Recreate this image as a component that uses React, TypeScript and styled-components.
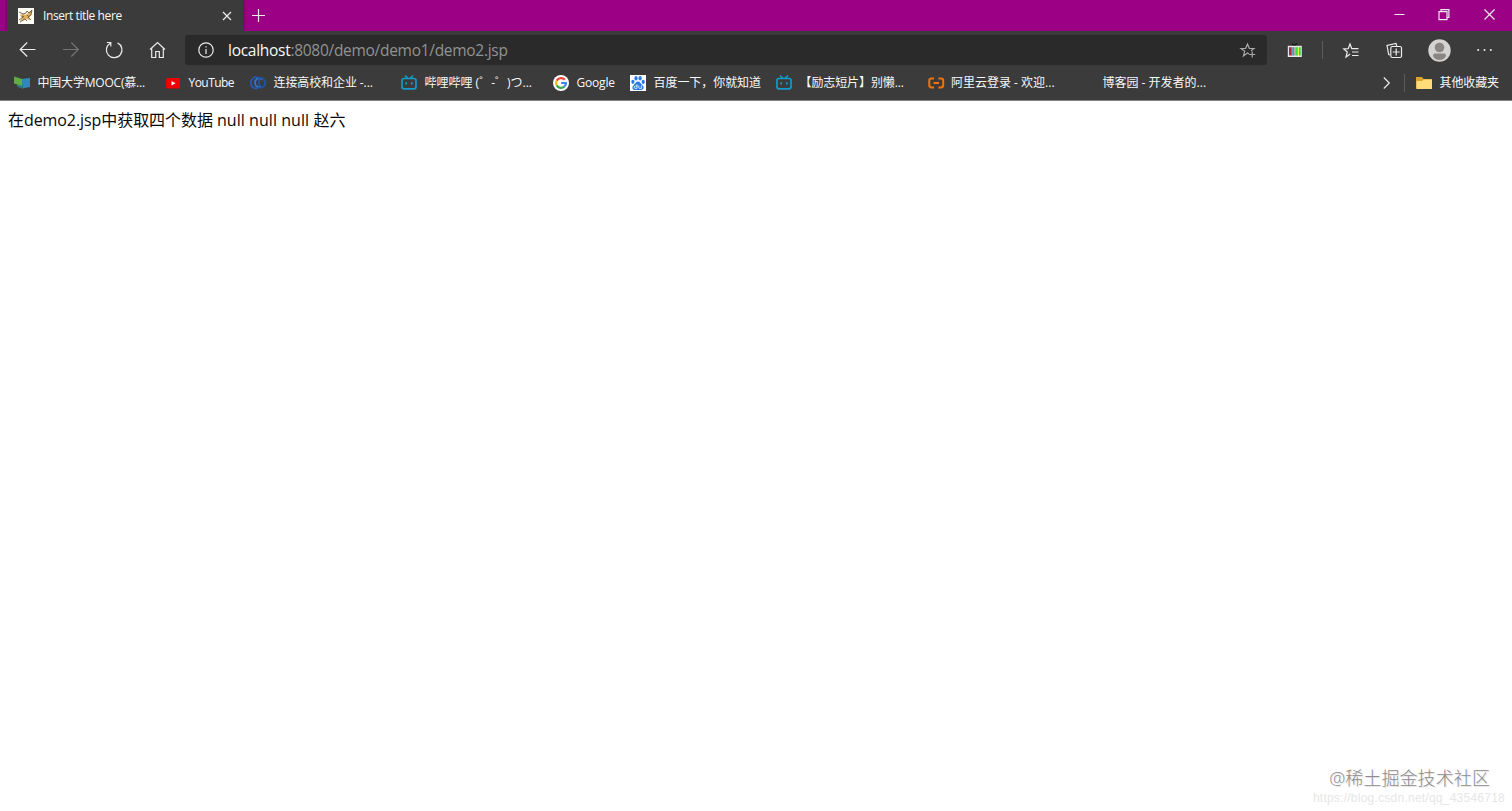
import React from 'react';
import styled, { createGlobalStyle } from 'styled-components';

const GlobalStyle = createGlobalStyle`
  * { box-sizing: border-box; }
  body { margin: 0; background: #fff; overflow: hidden; }
`;

const ui = `"Open Sans", "Noto Sans CJK SC", sans-serif`;

const Window = styled.div`
  position: relative;
  height: 811px;
  display: flex;
  flex-direction: column;
  background: #fff;
  font-family: ${ui};
`;

const Icon = styled.svg<{ $gap?: number }>`
  display: block;
  flex: none;
  overflow: visible;
  margin-left: ${p => p.$gap ?? 0}px;
`;

const Label = styled.span<{ $size?: number; $spacing?: number; $color?: string }>`
  white-space: pre;
  font-size: ${p => p.$size ?? 12}px;
  letter-spacing: ${p => p.$spacing ?? 0}px;
  color: ${p => p.$color ?? '#f8f8f8'};
`;

const TitleBar = styled.div`
  display: flex;
  height: 31px;
  flex: none;
  padding-left: 7px;
  background: #9b0085;
`;

const Tab = styled.div`
  display: flex;
  align-items: center;
  width: 236px;
  padding: 0 11px;
  background: #3b3b3b;
  box-shadow: 0 0 3px #5a004e;
`;

const TabTitle = styled(Label)`
  flex: 1;
  margin-left: 9px;
`;

const NewTab = styled.div`
  display: flex;
  flex: 1;
  align-items: center;
  padding-left: 9px;
`;

const Controls = styled.div`
  display: flex;
  align-items: center;
  gap: 34px;
  padding: 0 17px 2px 0;
`;

const Toolbar = styled.div`
  display: flex;
  align-items: center;
  height: 38px;
  flex: none;
  padding: 0 20px 0 19px;
  background: #3b3b3b;
`;

const Navigation = styled.div`
  display: flex;
  gap: 26px;
  width: 166px;
`;

const Address = styled.div`
  display: flex;
  align-items: center;
  width: 1082px;
  height: 30px;
  padding: 0 11px 0 13px;
  border-radius: 3px;
  background: #2a2a2a;
`;

const Url = styled.div`
  flex: 1;
  margin-left: 14px;
  line-height: 28px;
`;

const Actions = styled.div`
  display: flex;
  flex: 1;
  align-items: center;
`;

const Separator = styled.i<{ $height: number; $gap?: number }>`
  width: 1px;
  height: ${p => p.$height}px;
  margin-left: ${p => p.$gap ?? 0}px;
  background: #5c5c5c;
`;

const Bookmarks = styled.div`
  display: flex;
  align-items: center;
  height: 32px;
  flex: none;
  padding: 0 13px 4px 14px;
  background: #3b3b3b;
  border-bottom: 1px solid #828282;
`;

const Bookmark = styled.div<{ $width: number }>`
  display: flex;
  align-items: center;
  gap: 7.5px;
  width: ${p => p.$width}px;
  height: 26px;
  flex: none;
  line-height: 16px;
`;

const IconSlot = styled.span`
  display: block;
  width: 16px;
  height: 16px;
  flex: none;
`;

const Overflow = styled.div`
  display: flex;
  flex: 1;
  align-items: center;
  justify-content: flex-end;
  gap: 14px;
  padding-right: 11px;
`;

const Page = styled.main`
  flex: 1;
  padding: 8px;
  line-height: 22px;
`;

const Watermark = styled.div`
  position: absolute;
  right: 22px;
  bottom: 18px;
  line-height: 28px;
  font-weight: 300;
  text-shadow: 1px 1px 1px #ddd;
`;

const SourceUrl = styled.div`
  position: absolute;
  right: 7px;
  bottom: 5px;
  line-height: 16px;
  font-family: "Liberation Sans", sans-serif;
`;

const line = { fill: 'none', stroke: '#ececec', strokeWidth: 1.2 };

const CatIcon = () => (
  <Icon width="16" height="16" viewBox="0 0 16 16">
    <path fill="#fdfcf5" d="M0 0h16v16H0z" />
    <path fill="#deb060" d="M2 7l3-1 3 1 3-3 3-2-1 5-2 3 1 2-4-1-3 1-3 1 2-3z" />
    <path fill="none" stroke="#5c452b" strokeWidth=".8" d="M1 4l4 2 3-1 1-2 2 2 3-3-1 5-3 2 3 3M1 12l4-3M2 14l5-3 2 2M4 8l2 1M9 7l1 1" />
  </Icon>
);

const MoocIcon = () => (
  <Icon width="16" height="16" viewBox="0 0 16 16">
    <path fill="#2b8bb4" d="M7 4l9-1v9l-8 1.5-5-2z" />
    <path fill="#2d7772" d="M3 10l6-1v4.5l-6-2z" />
    <path fill="#60ae43" d="M0 1.5l8 2.5v7L0 8.6z" />
  </Icon>
);

const YoutubeIcon = () => (
  <Icon width="16" height="16" viewBox="0 0 16 16">
    <rect x="1" y="3" width="14" height="10.5" rx="1.5" fill="#f00000" />
    <path fill="#fff" d="M6.5 6l4 2.2-4 2.2z" />
  </Icon>
);

const LinkIcon = () => (
  <Icon width="16" height="16" viewBox="0 0 16 16" fill="none" strokeWidth="1.8">
    <path stroke="#2459b4" d="M9 3.6C5-.2.8 4 .9 8c0 4.5 4.3 6.7 7.6 4.4" />
    <path stroke="#3674c9" d="M12 4.5C8 1.6 4.7 4.7 5 8c.2 3.2 3.4 5 6 3.2" />
    <path stroke="#1e55a7" d="M8 3.5c4-2 7.5 1 7.2 4.7-.2 3.4-3.6 5.5-7.2 3.8M10 5c-2 1-2 5 1 6" />
  </Icon>
);

const BiliIcon = () => (
  <Icon width="16" height="16" viewBox="0 0 16 16" fill="none" stroke="#159bc9" strokeWidth="1.7" strokeLinecap="round">
    <rect x="1" y="3.5" width="14" height="10.3" rx="2" />
    <path d="M4.5 1l2 2M11.5 1l-2 2M5.2 7.8v1M10.8 7.8v1" />
  </Icon>
);

const GoogleIcon = () => (
  <Icon width="16" height="16" viewBox="0 0 16 16">
    <circle cx="8" cy="8" r="8" fill="#fff" />
    <g fill="none" strokeWidth="2.2">
      <path stroke="#ea4335" d="M11.8 4.8A5 5 0 0 0 3.7 5.6" />
      <path stroke="#fbbc05" d="M3.7 5.6a5 5 0 0 0 0 4.8" />
      <path stroke="#34a853" d="M3.7 10.4a5 5 0 0 0 7.6 1.3" />
      <path stroke="#4285f4" d="M11.3 11.7A5 5 0 0 0 13 8H8.2" />
    </g>
  </Icon>
);

const BaiduIcon = () => (
  <Icon width="16" height="16" viewBox="0 0 16 16">
    <path fill="#fff" d="M0 0h16v16H0z" />
    <g fill="#2879e5">
      <ellipse cx="2.9" cy="6.8" rx="1.6" ry="2.1" />
      <ellipse cx="6" cy="3.3" rx="1.6" ry="2.2" />
      <ellipse cx="10.1" cy="3.3" rx="1.6" ry="2.2" />
      <ellipse cx="13.2" cy="6.9" rx="1.6" ry="2.1" />
      <path d="M8 6.5c2 0 2.6 2 4 3.3 3 2.8 1.4 5.2-1.2 5.2H5.2c-3 0-3.8-2.8-1.4-5C5.4 8.5 6 6.5 8 6.5z" />
    </g>
    <path fill="none" stroke="#fff" strokeWidth=".8" d="M7 9.2v4.2H5.3a1.1 1.1 0 0 1 0-2.3H7M8.8 10.5v2.2q0 .7.8.7h1.8v-3" />
  </Icon>
);

const AliIcon = () => (
  <Icon width="16" height="16" viewBox="0 0 16 16" fill="none" stroke="#ee7411" strokeWidth="2">
    <path d="M6 3.5H3.5Q1.3 3.5 1.3 5.2v5.4q0 1.8 2.2 1.8H6M10.5 3.5H13q2.2 0 2.2 1.7v5.4q0 1.8-2.2 1.8h-2.5M5.5 8H11" />
  </Icon>
);

const bookmarks: { title: string; width: number; icon?: React.ReactNode; spacing?: number }[] = [
  { title: '中国大学MOOC(慕...', width: 151, icon: <MoocIcon />, spacing: -0.2 },
  { title: 'YouTube', width: 85, icon: <YoutubeIcon />, spacing: -0.55 },
  { title: '连接高校和企业 -...', width: 151, icon: <LinkIcon />, spacing: -0.1 },
  { title: '哔哩哔哩 (゜-゜)つ...', width: 152, icon: <BiliIcon /> },
  { title: 'Google', width: 77, icon: <GoogleIcon />, spacing: -0.2 },
  { title: '百度一下，你就知道', width: 146, icon: <BaiduIcon />, spacing: -0.06 },
  { title: '【励志短片】别懒...', width: 151.5, icon: <BiliIcon />, spacing: -0.1 },
  { title: '阿里云登录 - 欢迎...', width: 151.5, icon: <AliIcon /> },
  { title: '博客园 - 开发者的...', width: 151 },
];

export default function App() {
  return (
    <Window>
      <GlobalStyle />
      <TitleBar>
        <Tab>
          <CatIcon />
          <TabTitle $spacing={-0.41}>Insert title here</TabTitle>
          <Icon width="10" height="10" viewBox="0 0 10 10" {...line}><path d="M1 1l8 8M9 1L1 9" /></Icon>
        </Tab>
        <NewTab>
          <Icon width="13" height="13" viewBox="0 0 13 13" {...line}><path d="M6.5 0v13M0 6.5h13" /></Icon>
        </NewTab>
        <Controls>
          <Icon width="10" height="10" viewBox="0 0 10 10" {...line} strokeWidth={1}><path d="M-.5 4.5h10" /></Icon>
          <Icon width="11" height="11" viewBox="0 0 11 11" {...line}><path d="M0 2.6h8v8H0zM2 2.5V.6h7.9v7.9H8" /></Icon>
          <Icon width="11" height="11" viewBox="0 0 11 11" {...line}><path d="M.5.5l10 10M10.5.5l-10 10" /></Icon>
        </Controls>
      </TitleBar>
      <Toolbar>
        <Navigation>
          <Icon width="17" height="17" viewBox="0 0 17 17" {...line}><path d="M16.5 8.5H1.2M8.2 1.5l-7 7 7 7" /></Icon>
          <Icon width="17" height="17" viewBox="0 0 17 17" {...line} stroke="#747474"><path d="M1 8.5h15.3M9.3 1.5l7 7-7 7" /></Icon>
          <Icon width="18" height="18" viewBox="0 0 18 18" {...line}><path d="M12.6 1.9A7.8 7.8 0 1 1 5.2 2.2M1.8 1.5h4v4" /></Icon>
          <Icon width="17" height="17" viewBox="0 0 17 17" {...line}><path d="M1 8.5l7.5-7 7.5 7M2.7 7.2v9.3h4v-6h3.6v6h4V7.2" /></Icon>
        </Navigation>
        <Address>
          <Icon width="16" height="16" viewBox="0 0 16 16" {...line}>
            <circle cx="8" cy="8" r="7.2" /><path d="M8 7v5M8 4.2v1.4" />
          </Icon>
          <Url>
            <Label $size={15.5} $spacing={-0.28}>localhost</Label>
            <Label $size={15.5} $spacing={-0.29} $color="#929292">:8080/demo/demo1/demo2.jsp</Label>
          </Url>
          <Icon width="16" height="16" viewBox="0 0 16 16" {...line} stroke="#a9a9a9">
            <path d="M9 12l-1.5-1L3.4 14l1.3-4.7L1 6.5l4.7-.2L7.5 2l1.8 4.3 4.7.2-3 2.3M12.2 9.5v6M9.2 12.5h6" />
          </Icon>
        </Address>
        <Actions>
          <Icon $gap={20} width="16" height="16" viewBox="0 0 16 16">
            <path stroke="#191919" fill="none" strokeWidth="1.5" d="M5 1.5l2.5 2 2.5-2" />
            <path fill="#e9e9e9" d="M.8 3.8h14V15H.8z" />
            <path fill="#b22a35" d="M2 5.2h2.6v8.3H2z" /><path fill="#555" d="M4.6 5.2h.7v8.3h-.7z" />
            <path fill="#369bd2" d="M5.3 5.2h2.2v8.3H5.3z" /><path fill="#e79565" d="M7.5 5.2h1.4v8.3H7.5z" />
            <path fill="#39df43" d="M8.9 5.2h2v8.3h-2z" /><path fill="#e9f33f" d="M10.9 5.2h1.2v8.3h-1.2z" />
            <path fill="#31ce45" d="M12.1 5.2h1.6v8.3h-1.6z" />
          </Icon>
          <Separator $height={18} $gap={19} />
          <Icon $gap={20} width="17" height="17" viewBox="0 0 17 17" {...line}>
            <path d="M7.2 12L3 15l1.3-5L.8 7l4.4-.3L7 2l1.8 4.7h6.7M9 10h6.5M9 13.5h6.5" />
          </Icon>
          <Icon $gap={26} width="17" height="17" viewBox="0 0 17 17" {...line}>
            <path d="M4 13l-1.3-.4L1 3.5l9-2 .8 2.5" /><rect x="4.8" y="4.5" width="10.7" height="11" rx="1.5" /><path d="M10.2 6.5v7M6.7 10h7" />
          </Icon>
          <Icon $gap={25} width="23" height="23" viewBox="0 0 23 23">
            <circle cx="11.5" cy="11.5" r="11.2" fill="#d4d3d2" />
            <circle cx="11.5" cy="8.5" r="4.8" fill="#888786" />
            <path fill="#888786" d="M5 17c0-2 1-2.4 3-2.4h7c2 0 3 .5 3 2.4-1.5 3-4 4-6.5 4S6.5 20 5 17z" />
          </Icon>
          <Icon $gap={26} width="15" height="4" viewBox="0 0 15 4" fill="#ededed">
            <circle cx="1.2" cy="2" r="1" /><circle cx="7.5" cy="2" r="1" /><circle cx="13.8" cy="2" r="1" />
          </Icon>
        </Actions>
      </Toolbar>
      <Bookmarks>
        {bookmarks.map(item => (
          <Bookmark key={item.title} $width={item.width}>
            <IconSlot>{item.icon}</IconSlot>
            <Label $spacing={item.spacing}>{item.title}</Label>
          </Bookmark>
        ))}
        <Overflow>
          <Icon width="7" height="12" viewBox="0 0 7 12" {...line}><path d="M.8.5L6.3 6 .8 11.5" /></Icon>
          <Separator $height={18} />
        </Overflow>
        <Bookmark $width={83}>
          <Icon width="16" height="16" viewBox="0 0 16 16">
            <path fill="#d7a22e" d="M0 2h6l1.5 2H16v9.5H0z" />
            <path fill="#ffdc78" d="M.5 6H6l1.5-1.5H16V14H.5z" />
          </Icon>
          <Label $spacing={-0.1}>其他收藏夹</Label>
        </Bookmark>
      </Bookmarks>
      <Page>
        <Label $size={16} $spacing={-0.07} $color="#080808">在demo2.jsp中获取四个数据 </Label>
        <Label $size={16} $spacing={0.06} $color="#080808">null null null 赵六</Label>
      </Page>
      <Watermark><Label $size={18.1} $color="#8c8c8c">@稀土掘金技术社区</Label></Watermark>
      <SourceUrl><Label $size={12} $spacing={0.24} $color="#e6e6e6">https://blog.csdn.net/qq_43546718</Label></SourceUrl>
    </Window>
  );
}
